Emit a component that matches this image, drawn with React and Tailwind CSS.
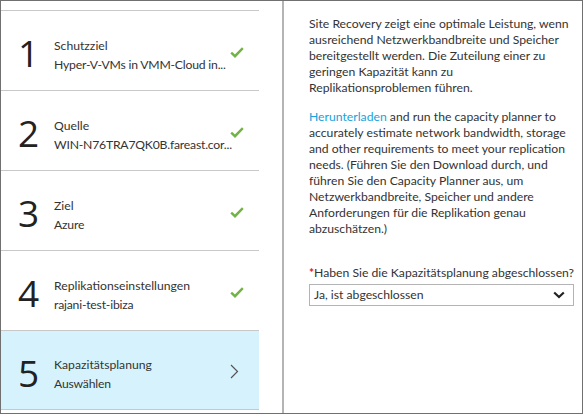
const steps = [
  { n: "1", title: "Schutzziel", sub: "Hyper-V-VMs in VMM-Cloud in...", done: true },
  { n: "2", title: "Quelle", sub: "WIN-N76TRA7QK0B.fareast.cor...", done: true },
  { n: "3", title: "Ziel", sub: "Azure", done: true },
  { n: "4", title: "Replikationseinstellungen", sub: "rajani-test-ibiza", done: true },
  { n: "5", title: "Kapazitätsplanung", sub: "Auswählen", done: false },
];

const Check = () => (
  <svg width="14" height="11" viewBox="0 0 14 11" fill="none">
    <path d="M1.2 5.6 L5 9.2 L12.8 1.2" stroke="#72b443" strokeWidth="2.4" />
  </svg>
);

const ChevronRight = () => (
  <svg width="9" height="15" viewBox="0 0 9 15" fill="none">
    <path d="M1 1 L7.5 7.5 L1 14" stroke="#555" strokeWidth="1.2" />
  </svg>
);

const ChevronDown = () => (
  <svg width="12" height="8" viewBox="0 0 12 8" fill="none">
    <path d="M1.2 1.5 L6 6 L10.8 1.5" stroke="#222" strokeWidth="2.2" />
  </svg>
);

const StepRow = ({ step, last }) => (
  <div
    className={`h-[80px] flex items-center border-t border-[#c8c8c8] ${
      last ? "border-b bg-[#d6f3fd]" : ""
    }`}
  >
    <div
      className="w-[53px] shrink-0 pl-[17px] pt-[4px] text-[37px] leading-none text-[#222]"
      style={{ fontFamily: '"Open Sans", sans-serif' }}
    >
      {step.n}
    </div>
    <div className="w-[176px] shrink-0 pt-[8px] text-[12.2px] leading-[19px] text-[#333] whitespace-nowrap">
      <div>{step.title}</div>
      <div className="tracking-[-0.2px]">{step.sub}</div>
    </div>
    <div className="shrink-0 pt-[3px] flex justify-start">
      {step.done ? <Check /> : <ChevronRight />}
    </div>
  </div>
);

export default function App() {
  return (
    <div
      className="w-[583px] h-[414px] border border-[#707070] bg-white flex"
      style={{ fontFamily: 'Lato, "Open Sans", sans-serif' }}
    >
      {/* step list */}
      <div className="w-[281px] pt-[9px]">
        <div className="w-[258px]">
          {steps.map((s, i) => (
            <StepRow key={s.n} step={s} last={i === steps.length - 1} />
          ))}
        </div>
      </div>

      {/* details */}
      <div className="flex-1 border-l-2 border-[#b4b4b4] pl-[25px] pr-[8px] pt-[15px] text-[12.2px] leading-[16px] text-[#333]">
        <p>
          Site Recovery zeigt eine optimale Leistung, wenn ausreichend Netzwerkbandbreite
          und Speicher bereitgestellt werden. Die Zuteilung einer zu geringen Kapazität
          kann zu Replikationsproblemen führen.
        </p>
        <p className="mt-[13px]">
          <span className="text-[#17a3dc]">Herunterladen</span> and run the capacity
          planner to accurately estimate network bandwidth, storage and other
          requirements to meet your replication needs. (Führen Sie den Download durch,
          und führen Sie den Capacity Planner aus, um Netzwerkbandbreite, Speicher und
          andere Anforderungen für die Replikation genau abzuschätzen.)
        </p>

        <div className="mt-[28px] w-[265px]">
          <div className="flex items-start whitespace-nowrap">
            <span className="text-[#e81123] font-bold w-[11px] text-[12px]">*</span>
            <span>Haben Sie die Kapazitätsplanung abgeschlossen?</span>
          </div>
          <div className="mt-[3px] h-[22px] border border-[#b4b4b4] flex items-center justify-between pl-[4px] pr-[8px]">
            <span>Ja, ist abgeschlossen</span>
            <ChevronDown />
          </div>
        </div>
      </div>
    </div>
  );
}
